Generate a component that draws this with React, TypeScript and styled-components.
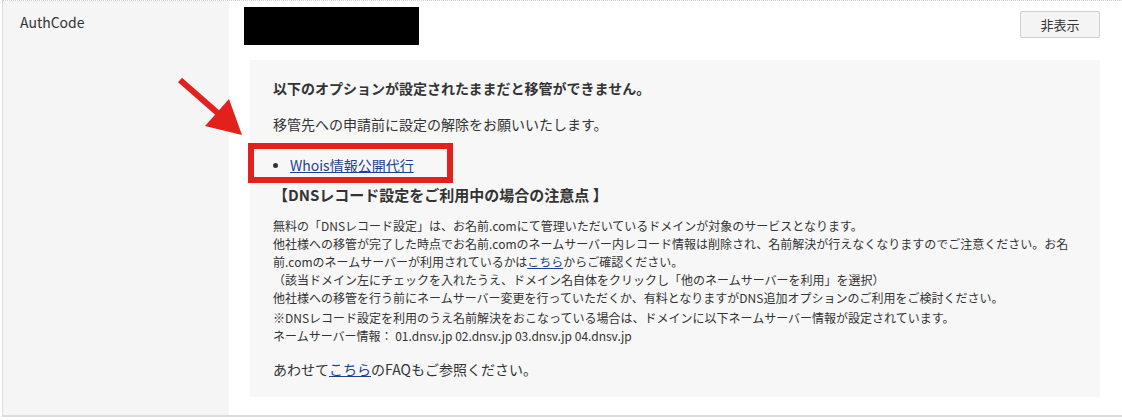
import styled, { createGlobalStyle } from 'styled-components';

const GlobalStyle = createGlobalStyle`
  body {
    margin: 0;
    background: #fff;
    font-family: "Noto Sans CJK JP", "Noto Sans", sans-serif;
    color: #333;
  }
`;

function App() {
  return (
    <>
      <GlobalStyle />
      <StyledRow>
        <StyledLabel>AuthCode</StyledLabel>
        <StyledCell>
          <StyledTop>
            <StyledRedacted />
            <StyledButton type="button">非表示</StyledButton>
          </StyledTop>
          <StyledNotice>
            <StyledArrow width="80" height="75" viewBox="170 70 80 75">
              <line x1="180" y1="80" x2="220" y2="115" stroke="#e2211c" strokeWidth="6" />
              <polygon points="242,135 205,126 229,99" fill="#e2211c" />
            </StyledArrow>
            <StyledHighlight />
            <StyledHeading>以下のオプションが設定されたままだと移管ができません。</StyledHeading>
            <StyledText>移管先への申請前に設定の解除をお願いいたします。</StyledText>
            <StyledList>
              <li>
                <StyledLink href="#">Whois情報公開代行</StyledLink>
              </li>
            </StyledList>
            <StyledSubHeading>【DNSレコード設定をご利用中の場合の注意点 】</StyledSubHeading>
            <StyledSmall>
              無料の「DNSレコード設定」は、お名前.comにて管理いただいているドメインが対象のサービスとなります。
              <br />
              他社様への移管が完了した時点でお名前.comのネームサーバー内レコード情報は削除され、名前解決が行えなくなりますのでご注意ください。お名
              <br />
              前.comのネームサーバーが利用されているかは<StyledLink href="#">こちら</StyledLink>からご確認ください。
              <br />
              （該当ドメイン左にチェックを入れたうえ、ドメイン名自体をクリックし「他のネームサーバーを利用」を選択）
              <br />
              他社様への移管を行う前にネームサーバー変更を行っていただくか、有料となりますがDNS追加オプションのご利用をご検討ください。
            </StyledSmall>
            <StyledSmall $gap={2}>
              ※DNSレコード設定を利用のうえ名前解決をおこなっている場合は、ドメインに以下ネームサーバー情報が設定されています。
              <br />
              ネームサーバー情報： 01.dnsv.jp 02.dnsv.jp 03.dnsv.jp 04.dnsv.jp
            </StyledSmall>
            <StyledText $gap={14}>
              あわせて<StyledLink href="#">こちら</StyledLink>のFAQもご参照ください。
            </StyledText>
          </StyledNotice>
        </StyledCell>
      </StyledRow>
    </>
  );
}

const StyledRow = styled.div`
  display: grid;
  grid-template-columns: 226px 1fr;
  margin-left: 2px;
  border-left: 1px solid #dcdcdc;
  border-top: 1px dotted #d0d0d0;
  border-bottom: 2px solid #dcdcdc;
`;

const StyledLabel = styled.div`
  background: #f5f5f5;
  padding: 11px 17px;
  font-size: 14px;
  line-height: 20px;
  color: #333;
`;

const StyledCell = styled.div`
  padding: 6px 22px 18px 15px;
`;

const StyledTop = styled.div`
  display: flex;
  justify-content: space-between;
  align-items: flex-start;
`;

const StyledRedacted = styled.div`
  width: 175px;
  height: 38px;
  background: #000;
`;

const StyledButton = styled.button`
  margin-top: 4px;
  width: 80px;
  height: 27px;
  padding: 0;
  background: #f4f4f4;
  border: 1px solid #cfcfcf;
  border-radius: 2px;
  font-family: inherit;
  font-size: 13px;
  color: #333;
`;

const StyledNotice = styled.div`
  position: relative;
  margin: 15px 0 0 6px;
  padding: 18px 23px 18px;
  background: #f7f7f7;
`;

// annotation overlays drawn on the screenshot
const StyledArrow = styled.svg`
  position: absolute;
  left: -80px;
  top: 10px;
  overflow: visible;
`;

const StyledHighlight = styled.div`
  position: absolute;
  left: -2px;
  top: 83px;
  width: 205px;
  height: 40px;
  box-sizing: border-box;
  border: 6px solid #e2211c;
`;

const StyledHeading = styled.div`
  font-size: 14px;
  line-height: 20px;
  font-weight: bold;
`;

const StyledText = styled.div<{ $gap?: number }>`
  margin-top: ${({ $gap }) => $gap ?? 16}px;
  font-size: 14px;
  line-height: 20px;
`;

const StyledList = styled.ul`
  margin: 21px 0 0;
  padding: 0;
  list-style: none;
  font-size: 14px;
  line-height: 20px;

  li {
    display: flex;
    align-items: center;
    gap: 12px;
  }

  li::before {
    content: '';
    width: 5px;
    height: 5px;
    border-radius: 50%;
    background: #333;
  }
`;

const StyledLink = styled.a`
  color: #1d4291;
  text-decoration: underline;
`;

const StyledSubHeading = styled.div`
  margin-top: 10px;
  font-size: 15px;
  line-height: 20px;
  font-weight: bold;
`;

const StyledSmall = styled.div<{ $gap?: number }>`
  margin-top: ${({ $gap }) => $gap ?? 12}px;
  font-size: 12px;
  line-height: 18px;
`;

export default App;
